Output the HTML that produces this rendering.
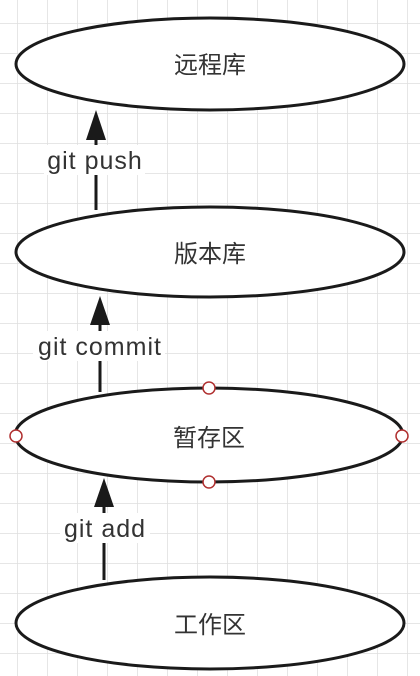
<!DOCTYPE html>
<html><head><meta charset="utf-8"><style>
html,body{margin:0;padding:0;background:#fff;}
svg{display:block}
</style></head><body>
<svg width="420" height="676" viewBox="0 0 420 676" xmlns="http://www.w3.org/2000/svg">
<defs>
<pattern id="g" x="17" y="23" width="30" height="30" patternUnits="userSpaceOnUse">
<path d="M0 0V30M0 0H30" stroke="#dedede" stroke-width="1.5" fill="none"/>
</pattern>
</defs>
<rect width="420" height="676" fill="#fff"/>
<rect width="420" height="676" fill="url(#g)"/>
<g stroke="#1a1a1a" stroke-width="3" fill="#fff">
<ellipse cx="210" cy="64" rx="194" ry="46"/>
<ellipse cx="210" cy="252" rx="194" ry="45"/>
<ellipse cx="209" cy="435" rx="194" ry="47"/>
<ellipse cx="210" cy="623" rx="194" ry="46"/>
</g>
<g stroke="#1a1a1a" stroke-width="3">
<line x1="96" y1="130" x2="96" y2="210"/>
<line x1="100" y1="318" x2="100" y2="392"/>
<line x1="104" y1="500" x2="104" y2="580"/>
</g>
<g fill="#1a1a1a">
<polygon points="96,110 86,140 106,140"/>
<polygon points="100,296 90,325 110,325"/>
<polygon points="104,478 94,507 114,507"/>
</g>
<g fill="#fff">
<rect x="44" y="145" width="101" height="30"/>
<rect x="33" y="331" width="132" height="30"/>
<rect x="60" y="513" width="90" height="30"/>
</g>
<g font-family="Liberation Sans, sans-serif" font-size="25" letter-spacing="1" fill="#333" text-anchor="middle">
<text x="95" y="169">git push</text>
<text x="100" y="355">git commit</text>
<text x="105" y="537">git add</text>
</g>
<g font-family="Liberation Sans, 'Noto Sans CJK SC', sans-serif" font-size="24" fill="#333" text-anchor="middle">
<text x="210" y="73">远程库</text>
<text x="210" y="262">版本库</text>
<text x="209" y="446">暂存区</text>
<text x="210" y="633">工作区</text>
</g>
<g fill="#fff" stroke="#b03030" stroke-width="1.5">
<circle cx="209" cy="388" r="6"/>
<circle cx="209" cy="482" r="6"/>
<circle cx="16" cy="436" r="6"/>
<circle cx="402" cy="436" r="6"/>
</g>
</svg>
</body></html>
